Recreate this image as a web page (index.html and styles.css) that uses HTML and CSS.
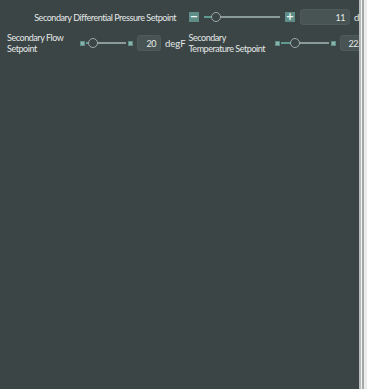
FILE: index.html
```html
<!DOCTYPE html>
<html lang="en">
<head>
    <meta charset="UTF-8">
    <meta name="viewport" content="width=device-width, initial-scale=1.0">
    <title>Secondary Setpoints</title>
    <link rel="stylesheet" href="styles.css">
</head>
<body>
    <div class="panel">
        <div class="fila fila-gran">
            <span class="etiqueta etiqueta-llarga">Secondary Differential Pressure Setpoint</span>
            <span class="boto boto-gran">&minus;</span>
            <div class="slider slider-gran">
                <span class="ple" style="width: 8px"></span>
                <span class="nansa"></span>
            </div>
            <span class="boto boto-gran">+</span>
            <span class="valor valor-gran">11</span>
            <span class="unitat">degF</span>
        </div>
        <div class="fila fila-petita">
            <div class="grup grup-flux">
                <span class="etiqueta etiqueta-doble">Secondary Flow<br>Setpoint</span>
                <span class="boto boto-petit"></span>
                <div class="slider slider-petit">
                    <span class="ple" style="width: 2px"></span>
                    <span class="nansa"></span>
                </div>
                <span class="boto boto-petit"></span>
                <span class="valor valor-petit">20</span>
                <span class="unitat">degF</span>
            </div>
            <div class="grup grup-temp">
                <span class="etiqueta etiqueta-doble">Secondary<br>Temperature Setpoint</span>
                <span class="boto boto-petit"></span>
                <div class="slider slider-temp">
                    <span class="ple" style="width: 9px"></span>
                    <span class="nansa"></span>
                </div>
                <span class="boto boto-petit"></span>
                <span class="valor valor-petit">22.2</span>
                <span class="unitat">degF</span>
            </div>
        </div>
    </div>
    <div class="barra">
        <span class="ratlla r1"></span>
        <span class="ratlla r2"></span>
        <span class="ratlla r3"></span>
        <span class="ratlla r4"></span>
    </div>
</body>
</html>
```

FILE: styles.css
```css
html {
    height: 100%;
}

body {
    margin: 0;
    height: 100%;
    display: flex;
    background: #3b4545;
    font-family: 'Lato', 'Liberation Sans', sans-serif;
    font-size: 9px;
    letter-spacing: -0.45px;
    color: #e4e8e8;
}

.panel {
    flex: 1;
    overflow: hidden;
    min-width: 0;
}

.fila {
    display: flex;
    align-items: center;
    white-space: nowrap;
}

.fila-gran {
    height: 16px;
    margin-top: 9px;
}

.fila-petita {
    margin-top: 7px;
    align-items: flex-start;
}

.grup {
    display: flex;
    align-items: center;
    flex-shrink: 0;
    height: 22px;
}

.grup-flux {
    padding-left: 7px;
}

.grup-temp {
    margin-left: 3px;
}

.etiqueta-llarga {
    width: 176px;
    text-align: right;
    margin-right: 13px;
    flex-shrink: 0;
}

.etiqueta-doble {
    line-height: 11px;
    flex-shrink: 0;
}

.grup-flux .etiqueta-doble {
    width: 73px;
}

.grup-temp .etiqueta-doble {
    width: 86px;
}

.boto {
    display: inline-flex;
    align-items: center;
    justify-content: center;
    flex-shrink: 0;
    background: #5f8e88;
    color: #eef4f3;
    box-sizing: border-box;
}

.boto-gran {
    width: 10px;
    height: 10px;
    font-size: 10px;
    line-height: 1;
    letter-spacing: 0;
    font-family: 'DejaVu Sans', sans-serif;
    font-weight: bold;
}

.boto-petit {
    width: 5px;
    height: 5px;
    border: 1px solid #5f8e88;
    background: #8ab5ae;
}

.slider {
    position: relative;
    height: 10px;
    flex-shrink: 0;
}

.slider::before {
    content: "";
    position: absolute;
    left: 0;
    right: 0;
    top: 4px;
    height: 2px;
    background: #8b9b99;
}

.ple {
    position: absolute;
    left: 0;
    top: 4px;
    height: 2px;
    background: #5f9a92;
}

.nansa {
    position: absolute;
    top: 0;
    width: 10px;
    height: 10px;
    box-sizing: border-box;
    border-radius: 50%;
    border: 1px solid #9aaaa8;
    background: #3b4545;
}

.slider-gran {
    width: 76px;
    margin: 0 5px;
}

.slider-gran .nansa {
    left: 7px;
}

.slider-petit {
    width: 40px;
    margin: 0 2px 0 1px;
}

.slider-petit .nansa {
    left: 2px;
}

.slider-temp {
    width: 48px;
    margin: 0 2px 0 1px;
}

.slider-temp .nansa {
    left: 9px;
}

.valor {
    display: inline-block;
    flex-shrink: 0;
    height: 16px;
    line-height: 16px;
    box-sizing: border-box;
    text-align: right;
    padding-right: 4px;
    background: #485353;
    border: 1px solid #4f5b5b;
    border-radius: 3px;
}

.valor-gran {
    width: 50px;
    margin-left: 5px;
}

.valor-petit {
    width: 24px;
    margin-left: 4px;
}

.grup-temp .valor-petit {
    width: 30px;
}

.unitat {
    margin-left: 4px;
    font-size: 9.5px;
    letter-spacing: 0;
    flex-shrink: 0;
}

.barra {
    width: 8px;
    display: flex;
    flex-shrink: 0;
}

.ratlla {
    height: 100%;
}

.r1 {
    width: 2px;
    background: #b9bcbc;
}

.r2 {
    width: 1px;
    background: #f2f2f2;
}

.r3 {
    width: 2px;
    background: #a5a8a8;
}

.r4 {
    flex: 1;
    background: #ececec;
}
```
